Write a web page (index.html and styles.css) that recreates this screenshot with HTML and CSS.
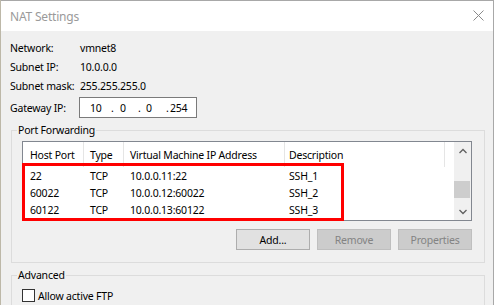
FILE: index.html
```html
<!DOCTYPE html>
<html lang="en">
<head>
  <meta charset="UTF-8" />
  <title>NAT Settings</title>
  <link rel="stylesheet" href="styles.css">
</head>
<body>
  <div class="window">
    <div class="titlebar">
      <span class="title">NAT Settings</span>
      <svg class="close" width="11" height="11" viewBox="0 0 11 11">
        <path d="M0.5 0.5 L10.5 10.5 M10.5 0.5 L0.5 10.5" stroke="#8a8a8a" stroke-width="1" fill="none" />
      </svg>
    </div>

    <div class="content">
      <div class="info">
        <span>Network:</span><span>vmnet8</span>
        <span>Subnet IP:</span><span>10.0.0.0</span>
        <span>Subnet mask:</span><span>255.255.255.0</span>
      </div>

      <div class="gateway">
        <span class="gateway-label">Gateway IP:</span>
        <div class="ip-input">
          <span>10</span><span>.</span><span>0</span><span>.</span><span>0</span><span>.</span><span>254</span>
        </div>
      </div>

      <fieldset class="group port-forwarding">
        <legend>Port Forwarding</legend>
        <div class="listview">
          <div class="list-body">
            <div class="list-row list-header">
              <span>Host Port</span>
              <span>Type</span>
              <span>Virtual Machine IP Address</span>
              <span class="desc">Description</span>
              <span></span>
            </div>
            <div class="list-row">
              <span>22</span><span>TCP</span><span>10.0.0.11:22</span><span class="desc">SSH_1</span><span></span>
            </div>
            <div class="list-row">
              <span>60022</span><span>TCP</span><span>10.0.0.12:60022</span><span class="desc">SSH_2</span><span></span>
            </div>
            <div class="list-row">
              <span>60122</span><span>TCP</span><span>10.0.0.13:60122</span><span class="desc">SSH_3</span><span></span>
            </div>
          </div>
          <div class="scrollbar">
            <div class="scroll-btn">
              <svg width="8" height="6" viewBox="0 0 8 6"><path d="M0.5 5 L4 1.5 L7.5 5" stroke="#606060" stroke-width="1.3" fill="none" /></svg>
            </div>
            <div class="scroll-track"><div class="scroll-thumb"></div></div>
            <div class="scroll-btn">
              <svg width="8" height="6" viewBox="0 0 8 6"><path d="M0.5 1 L4 4.5 L7.5 1" stroke="#606060" stroke-width="1.3" fill="none" /></svg>
            </div>
          </div>
          <div class="highlight"></div>
        </div>

        <div class="buttons">
          <button class="btn">Add...</button>
          <button class="btn" disabled>Remove</button>
          <button class="btn" disabled>Properties</button>
        </div>
      </fieldset>

      <fieldset class="group advanced">
        <legend>Advanced</legend>
        <label class="check"><span class="check-box"></span>Allow active FTP</label>
      </fieldset>
    </div>
  </div>
</body>
</html>
```

FILE: styles.css
```css
html, body {
  margin: 0;
  height: 100%;
  overflow: hidden;
}

body {
  background-color: #bdb8a8;
  font-family: 'Noto Sans', sans-serif;
  font-size: 10.5px;
  letter-spacing: -0.2px;
  color: #000;
}

.window {
  margin-left: 1px;
  width: 493px;
  height: 305px;
  overflow: hidden;
  box-sizing: border-box;
  border-top: 1px solid #a8a8a8;
  border-right: 1px solid #a8a8a8;
  background: #f0f0f0;
}

.titlebar {
  height: 30px;
  background: #fff;
  display: flex;
  align-items: center;
  justify-content: space-between;
  padding: 0 9px;
}

.title {
  font-size: 12px;
  color: #9a9a9a;
}

.close {
  margin-top: -1px;
}

.content {
  padding-left: 9px;
}

.info {
  display: grid;
  grid-template-columns: 70px auto;
  grid-auto-rows: 19px;
  align-items: center;
  padding-top: 7px;
}

.gateway {
  display: flex;
  align-items: center;
  margin-top: 2px;
  height: 21px;
}

.gateway-label {
  width: 69px;
}

.ip-input {
  width: 118px;
  height: 21px;
  box-sizing: border-box;
  border: 1px solid #7a7a7a;
  background: #fff;
  display: grid;
  grid-template-columns: 21px 9px 18px 8px 20px 4px auto;
  align-items: center;
  padding-left: 10px;
}

.group {
  margin: 4px 0 0 1px;
  width: 474px;
  box-sizing: border-box;
  border: 1px solid #dcdcdc;
  padding: 3px 12px 12px 10px;
  min-width: 0;
}

.group legend {
  line-height: 16px;
  padding: 0 1px;
  margin-left: -5px;
}

.listview {
  position: relative;
  height: 80px;
  box-sizing: border-box;
  border: 1px solid #828790;
  background: #fff;
  display: flex;
}

.list-body {
  flex: 1;
  overflow: hidden;
}

.list-row {
  display: grid;
  grid-template-columns: 61px 40px 161px 160px 1fr;
  height: 17px;
  align-items: center;
}

.list-row span {
  padding-left: 6px;
  white-space: nowrap;
}

.list-row span:first-child {
  padding-left: 7px;
}

.list-row .desc {
  padding-left: 4px;
}

.list-header {
  height: 25px;
  align-items: stretch;
}

.list-header span {
  display: flex;
  align-items: center;
  border-right: 1px solid #e5e5e5;
}

.list-header span:last-child {
  border-right: none;
}

.scrollbar {
  width: 17px;
  background: #f0f0f0;
  display: flex;
  flex-direction: column;
}

.scroll-btn {
  height: 17px;
  display: flex;
  align-items: center;
  justify-content: center;
}

.scroll-track {
  flex: 1;
  padding-top: 22px;
}

.scroll-thumb {
  height: 17px;
  margin-right: 1px;
  background: #cdcdcd;
}

.highlight {
  position: absolute;
  left: -1px;
  top: 21px;
  width: 322px;
  height: 58px;
  box-sizing: border-box;
  border: 3px solid #f00;
}

.buttons {
  display: flex;
  justify-content: flex-end;
  gap: 7px;
  margin-top: 8px;
}

.btn {
  width: 74px;
  height: 21px;
  padding: 0;
  font-family: 'Noto Sans', sans-serif;
  font-size: 10.5px;
  letter-spacing: -0.2px;
  color: #000;
  background: #e1e1e1;
  border: 1px solid #adadad;
}

.btn:disabled {
  color: #838383;
  background: #cccccc;
  border-color: #bfbfbf;
}

.advanced {
  margin-top: 4px;
  padding-top: 5px;
  height: 38px;
  border-bottom: none;
}

.check {
  display: flex;
  align-items: center;
  gap: 3px;
  height: 15px;
}

.check-box {
  width: 13px;
  height: 13px;
  box-sizing: border-box;
  border: 1px solid #333;
  background: #fff;
}
```
